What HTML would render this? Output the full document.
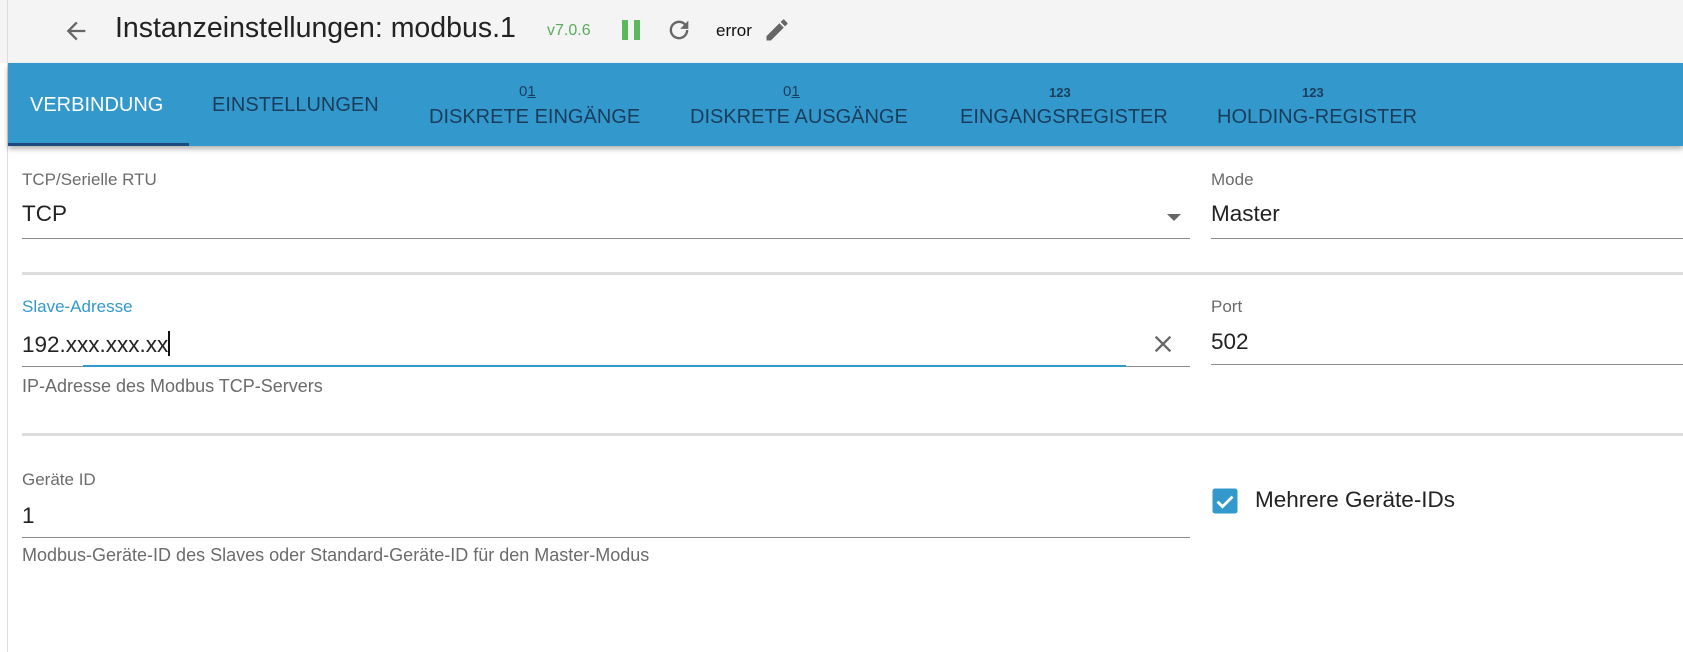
<!DOCTYPE html>
<html><head><meta charset="utf-8"><style>
*{margin:0;padding:0;box-sizing:border-box}
body{width:1683px;height:652px;overflow:hidden;background:#fff;font-family:"Liberation Sans",Arial,sans-serif;position:relative}
.a{position:absolute;white-space:nowrap}
.tab{position:absolute;color:#1b3d5c;font-size:20px;top:94px}
.ic{position:absolute;font-size:13px;font-weight:bold;color:#1b3d5c;top:85px}
.lbl{font-size:17px;color:#6b6b6b}
.val{font-size:22.5px;color:#222}
.ul{position:absolute;height:1px;background:#8c8c8c}
.sep{position:absolute;height:3px;background:#ddd;left:22px;right:0}
.help{font-size:18px;color:#6b6b6b}
</style></head><body>
<div class="a" style="left:0;top:0;width:1683px;height:63px;background:#f4f4f4"></div>
<div class="a" style="left:7px;top:0;width:1px;height:652px;background:#ddd"></div>
<svg class="a" style="left:62px;top:17px" width="28" height="28" viewBox="0 0 24 24"><path d="M20 11H7.8l5.6-5.6L12 4l-8 8 8 8 1.4-1.4L7.8 13H20z" fill="#666"/></svg>
<div class="a" style="left:115px;top:12px;font-size:28.5px;color:#222">Instanzeinstellungen: modbus.1</div>
<div class="a" style="left:547px;top:22px;font-size:16px;color:#5cab5c">v7.0.6</div>
<div class="a" style="left:622px;top:20px;width:6px;height:20px;background:#5cb85c"></div>
<div class="a" style="left:634px;top:20px;width:6px;height:20px;background:#5cb85c"></div>
<svg class="a" style="left:665px;top:16px" width="28" height="28" viewBox="0 0 24 24"><path d="M17.65 6.35A7.95 7.95 0 0012 4a8 8 0 108 8h-2a6 6 0 11-1.76-4.24L13 11h7V4z" fill="#666"/></svg>
<div class="a" style="left:716px;top:21px;font-size:17px;color:#111">error</div>
<svg class="a" style="left:763px;top:16px" width="28" height="28" viewBox="0 0 24 24"><path d="M3 17.25V21h3.75L17.8 9.94l-3.75-3.75zM20.7 7.04a1 1 0 000-1.41l-2.34-2.34a1 1 0 00-1.41 0l-1.830 1.83 3.75 3.75z" fill="#666"/></svg>
<div class="a" style="left:8px;top:63px;width:1675px;height:83px;background:#3399cc;box-shadow:0 3px 5px rgba(0,0,0,.3)"></div>
<div class="a" style="left:8px;top:143px;width:181px;height:3px;background:#1d4a7a"></div>
<div class="tab" style="left:30px;color:#fff">VERBINDUNG</div>
<div class="tab" style="left:212px">EINSTELLUNGEN</div>
<div class="ic" style="left:519px;font-weight:normal;font-size:15px;top:83px">0<u>1</u></div>
<div class="tab" style="left:429px;top:106px">DISKRETE EINGÄNGE</div>
<div class="ic" style="left:783px;font-weight:normal;font-size:15px;top:83px">0<u>1</u></div>
<div class="tab" style="left:690px;top:106px">DISKRETE AUSGÄNGE</div>
<div class="ic" style="left:1049px">123</div>
<div class="tab" style="left:960px;top:106px">EINGANGSREGISTER</div>
<div class="ic" style="left:1302px">123</div>
<div class="tab" style="left:1217px;top:106px">HOLDING-REGISTER</div>

<div class="a lbl" style="left:22px;top:170px">TCP/Serielle RTU</div>
<div class="a val" style="left:22px;top:201px">TCP</div>
<div class="a" style="left:1167px;top:214px;width:0;height:0;border-left:7px solid transparent;border-right:7px solid transparent;border-top:7px solid #666"></div>
<div class="ul" style="left:22px;top:238px;width:1168px"></div>
<div class="a lbl" style="left:1211px;top:170px">Mode</div>
<div class="a val" style="left:1211px;top:201px">Master</div>
<div class="ul" style="left:1211px;top:238px;width:472px"></div>
<div class="sep" style="top:272px"></div>

<div class="a lbl" style="left:22px;top:297px;color:#3399cc">Slave-Adresse</div>
<div class="a val" style="left:22px;top:331px">192.xxx.xxx.xx<span style="display:inline-block;width:2px;height:25px;background:#111;vertical-align:-4px"></span></div>
<svg class="a" style="left:1149px;top:330px" width="28" height="28" viewBox="0 0 24 24"><path d="M19 6.4L17.6 5 12 10.6 6.4 5 5 6.4 10.6 12 5 17.6 6.4 19 12 13.4 17.6 19 19 17.6 13.4 12z" fill="#666"/></svg>
<div class="ul" style="left:22px;top:366px;width:1168px"></div>
<div class="a" style="left:83px;top:365px;width:1043px;height:2px;background:#3399cc"></div>
<div class="a lbl" style="left:1211px;top:297px">Port</div>
<div class="a val" style="left:1211px;top:329px">502</div>
<div class="ul" style="left:1211px;top:364px;width:472px"></div>
<div class="a help" style="left:22px;top:376px">IP-Adresse des Modbus TCP-Servers</div>
<div class="sep" style="top:433px"></div>

<div class="a lbl" style="left:22px;top:470px">Geräte ID</div>
<div class="a val" style="left:22px;top:503px">1</div>
<div class="ul" style="left:22px;top:537px;width:1168px"></div>
<div class="a help" style="left:22px;top:545px">Modbus-Geräte-ID des Slaves oder Standard-Geräte-ID für den Master-Modus</div>
<svg class="a" style="left:1210px;top:486px" width="30" height="30" viewBox="0 0 24 24"><rect x="2" y="2" width="20" height="20" rx="2" fill="#3399cc"/><path d="M6 12.5l4 4 8-8" stroke="#fff" stroke-width="2.2" fill="none"/></svg>
<div class="a" style="left:1255px;top:487px;font-size:22.5px;color:#222">Mehrere Geräte-IDs</div>
</body></html>
